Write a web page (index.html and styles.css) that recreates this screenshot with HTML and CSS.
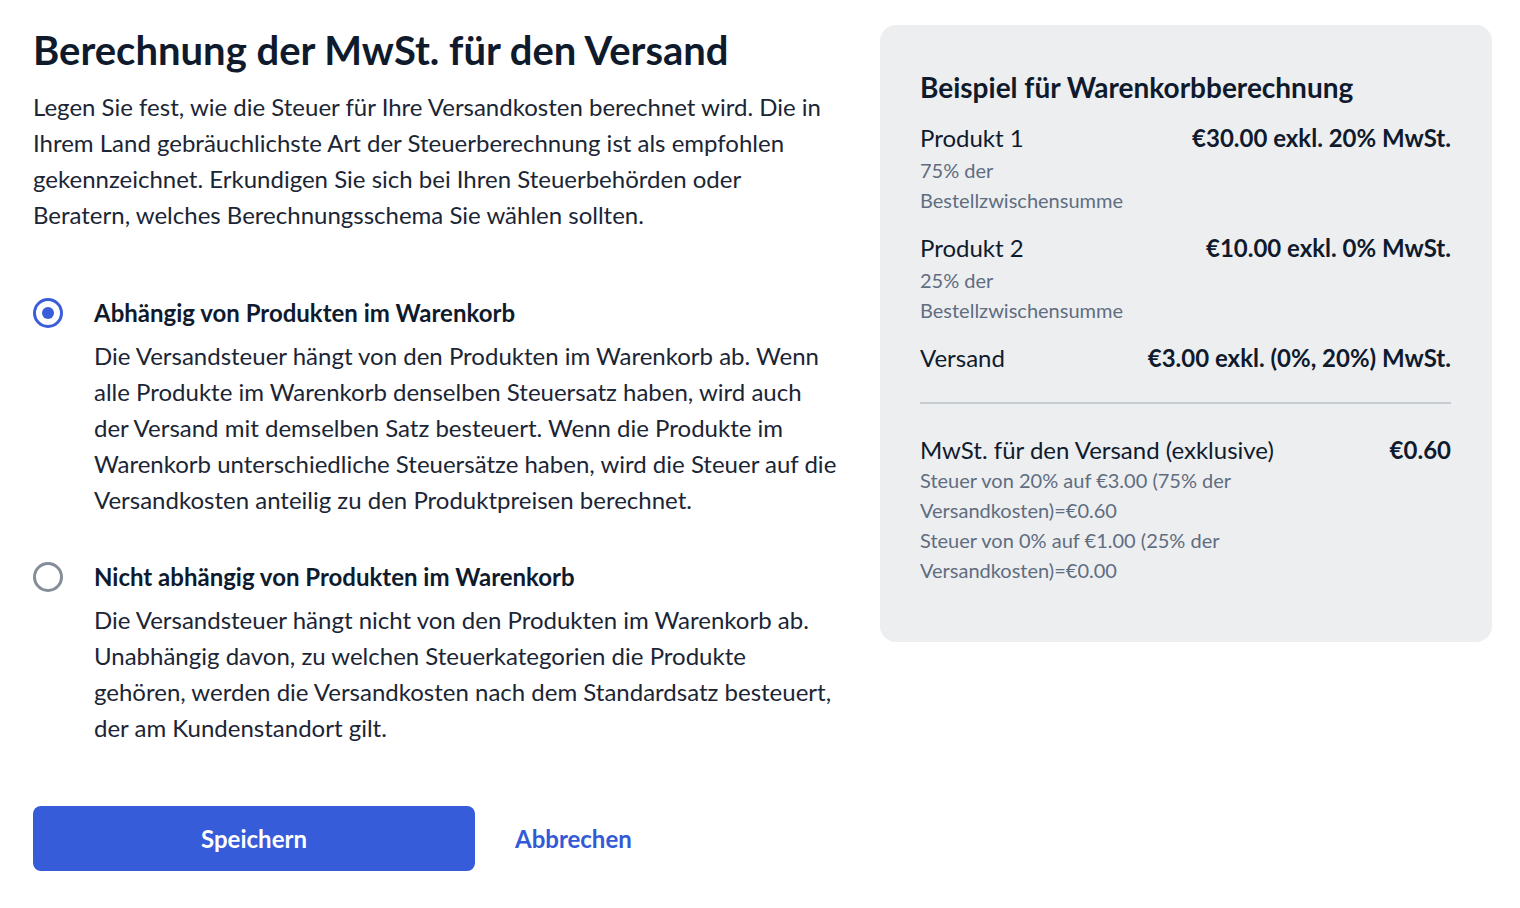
FILE: index.html
```html
<!DOCTYPE html>
<html lang="de">
<head>
<meta charset="utf-8">
<title>Berechnung der MwSt. für den Versand</title>
<link rel="stylesheet" href="styles.css">
</head>
<body>
<div class="page">
  <main class="main">
    <h1 class="title">Berechnung der MwSt. für den Versand</h1>
    <p class="intro">Legen Sie fest, wie die Steuer für Ihre Versandkosten berechnet wird. Die in Ihrem Land gebräuchlichste Art der Steuerberechnung ist als empfohlen gekennzeichnet. Erkundigen Sie sich bei Ihren Steuerbehörden oder Beratern, welches Berechnungsschema Sie wählen sollten.</p>

    <div class="options">
      <label class="option">
        <span class="radio radio-checked"><span class="radio-dot"></span></span>
        <span class="option-body">
          <span class="option-label">Abhängig von Produkten im Warenkorb</span>
          <span class="option-desc">Die Versandsteuer hängt von den Produkten im Warenkorb ab. Wenn alle Produkte im Warenkorb denselben Steuersatz haben, wird auch der Versand mit demselben Satz besteuert. Wenn die Produkte im Warenkorb unterschiedliche Steuersätze haben, wird die Steuer auf die Versandkosten anteilig zu den Produktpreisen berechnet.</span>
        </span>
      </label>
      <label class="option">
        <span class="radio"></span>
        <span class="option-body">
          <span class="option-label">Nicht abhängig von Produkten im Warenkorb</span>
          <span class="option-desc">Die Versandsteuer hängt nicht von den Produkten im Warenkorb ab. Unabhängig davon, zu welchen Steuerkategorien die Produkte gehören, werden die Versandkosten nach dem Standardsatz besteuert, der am Kundenstandort gilt.</span>
        </span>
      </label>
    </div>

    <div class="actions">
      <button class="btn-primary" type="button">Speichern</button>
      <button class="btn-link" type="button">Abbrechen</button>
    </div>
  </main>

  <aside class="panel">
    <h2 class="panel-title">Beispiel für Warenkorbberechnung</h2>
    <div class="rows">
      <div class="row">
        <div class="row-left">
          <div class="row-name">Produkt 1</div>
          <div class="row-sub">75% der Bestellzwischensumme</div>
        </div>
        <div class="row-value">€30.00 exkl. 20% MwSt.</div>
      </div>
      <div class="row">
        <div class="row-left">
          <div class="row-name">Produkt 2</div>
          <div class="row-sub">25% der Bestellzwischensumme</div>
        </div>
        <div class="row-value">€10.00 exkl. 0% MwSt.</div>
      </div>
      <div class="row">
        <div class="row-left">
          <div class="row-name">Versand</div>
        </div>
        <div class="row-value">€3.00 exkl. (0%, 20%) MwSt.</div>
      </div>
    </div>
    <hr class="divider">
    <div class="total">
      <div class="total-head">
        <div class="row-name">MwSt. für den Versand (exklusive)</div>
        <div class="row-value">€0.60</div>
      </div>
      <div class="total-sub">Steuer von 20% auf €3.00 (75% der Versandkosten)=€0.60</div>
      <div class="total-sub">Steuer von 0% auf €1.00 (25% der Versandkosten)=€0.00</div>
    </div>
  </aside>
</div>
</body>
</html>
```

FILE: styles.css
```css
* { box-sizing: border-box; }

body {
  margin: 0;
  background: #ffffff;
  color: #1b2535;
  font-family: Lato, "Liberation Sans", sans-serif;
}

.page {
  display: flex;
  align-items: flex-start;
  gap: 40px;
  padding: 25px 28px 0 33px;
}

.main {
  width: 807px;
  flex: 0 0 807px;
}

.title {
  margin: 0;
  font-size: 40px;
  line-height: 50px;
  font-weight: 700;
  color: #0f1b2d;
}

.intro {
  margin: 14px 0 0;
  font-size: 24px;
  line-height: 36px;
}

.options {
  margin-top: 62px;
  display: flex;
  flex-direction: column;
  gap: 41px;
}

.option {
  display: flex;
  gap: 31px;
  cursor: pointer;
}

.radio {
  flex: 0 0 30px;
  width: 30px;
  height: 30px;
  margin-top: 3px;
  border: 3px solid #858d98;
  border-radius: 50%;
  display: flex;
  align-items: center;
  justify-content: center;
}

.radio-checked {
  border-color: #3a5dd9;
}

.radio-dot {
  width: 12px;
  height: 12px;
  border-radius: 50%;
  background: #3a5dd9;
}

.option-body {
  display: flex;
  flex-direction: column;
}

.option-label {
  font-size: 24px;
  line-height: 36px;
  font-weight: 700;
  color: #0f1b2d;
}

.option-desc {
  margin-top: 7px;
  font-size: 24px;
  line-height: 36px;
}

.actions {
  margin-top: 60px;
  display: flex;
  align-items: center;
  gap: 40px;
}

.btn-primary {
  width: 442px;
  height: 65px;
  border: 0;
  border-radius: 8px;
  background: #365cd9;
  color: #ffffff;
  font-family: inherit;
  font-size: 24px;
  font-weight: 700;
  cursor: pointer;
}

.btn-link {
  border: 0;
  background: none;
  padding: 0;
  color: #3359d6;
  font-family: inherit;
  font-size: 24px;
  font-weight: 700;
  cursor: pointer;
}

.panel {
  flex: 0 0 612px;
  width: 612px;
  background: #edeef0;
  border-radius: 16px;
  padding: 50px 41px 57px 40px;
}

.panel-title {
  margin: 0;
  font-size: 28px;
  line-height: 24px;
  font-weight: 700;
  color: #0f1b2d;
}

.rows {
  margin-top: 22px;
  display: flex;
  flex-direction: column;
  gap: 16px;
}

.row {
  display: flex;
  justify-content: space-between;
  align-items: flex-start;
}

.row-left {
  width: 240px;
}

.row-name {
  font-size: 24px;
  line-height: 34px;
  color: #0f1b2d;
}

.row-sub,
.total-sub {
  font-size: 20px;
  line-height: 30px;
  color: #5f6d80;
}

.row-value {
  font-size: 24px;
  line-height: 34px;
  font-weight: 700;
  color: #0f1b2d;
  white-space: nowrap;
}

.divider {
  margin: 27px 0 29px;
  border: 0;
  height: 2px;
  background: #c7ccd2;
}

.total-head {
  display: flex;
  justify-content: space-between;
  height: 32px;
}

.total-sub {
  max-width: 360px;
}
```
